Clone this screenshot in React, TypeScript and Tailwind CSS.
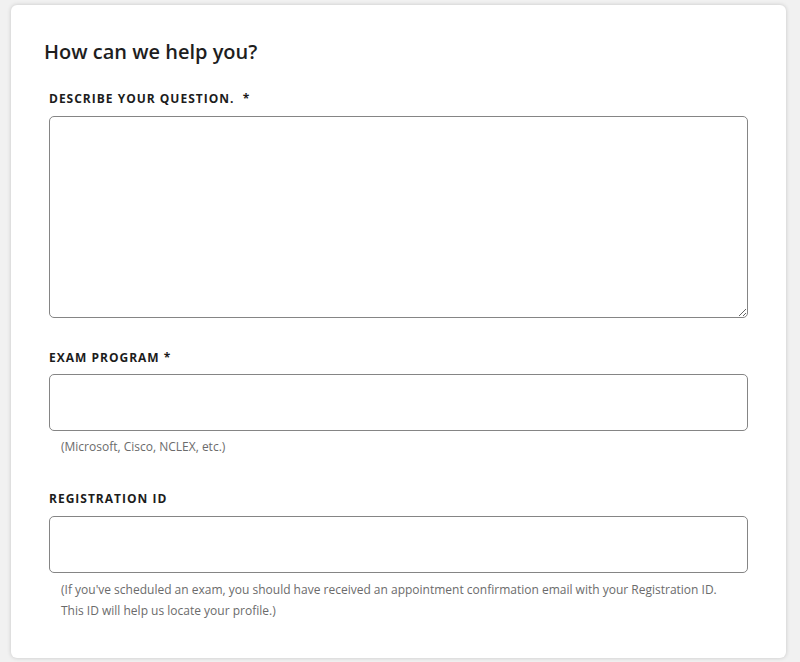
import React from 'react';

const labelClass =
    "block text-[12px] font-bold uppercase tracking-[1px] text-[#1c1c1c] leading-none";
const fieldClass =
    "block w-full rounded-[5px] border border-[#858585] bg-white outline-none";
const hintClass = "text-[12px] text-[#6b6b6b] leading-[21px] pl-3";

export default function App() {
    return (
        <div className="min-h-[662px] w-[800px] bg-[#f1f1f1] pt-[5px] pl-[11px] font-['Open_Sans',sans-serif]">
            <div className="w-[775px] h-[653px] bg-white rounded-[6px] shadow-[0_0_4px_rgba(0,0,0,0.18)] pl-[38px] pr-[38px] pt-[35px]">
                <h2 className="-ml-[5px] text-[20px] font-semibold text-[#1e1e1e] leading-[24px]">
                    How can we help you?
                </h2>

                {/* Question */}
                <label className={`${labelClass} mt-[29px]`}>
                    Describe your question.&nbsp;&nbsp;*
                </label>
                <textarea className={`${fieldClass} mt-[11px] h-[202px]`} />

                {/* Exam program */}
                <label className={`${labelClass} mt-[34px]`}>Exam Program *</label>
                <input type="text" className={`${fieldClass} mt-[10px] h-[57px]`} />
                <p className={`${hintClass} mt-[5px]`}>(Microsoft, Cisco, NCLEX, etc.)</p>

                {/* Registration */}
                <label className={`${labelClass} mt-[36px]`}>Registration ID</label>
                <input type="text" className={`${fieldClass} mt-[11px] h-[57px]`} />
                <p className={`${hintClass} mt-[6px]`}>
                    (If you've scheduled an exam, you should have received an appointment confirmation email with your Registration ID.
                    <br />
                    This ID will help us locate your profile.)
                </p>
            </div>
        </div>
    );
}
